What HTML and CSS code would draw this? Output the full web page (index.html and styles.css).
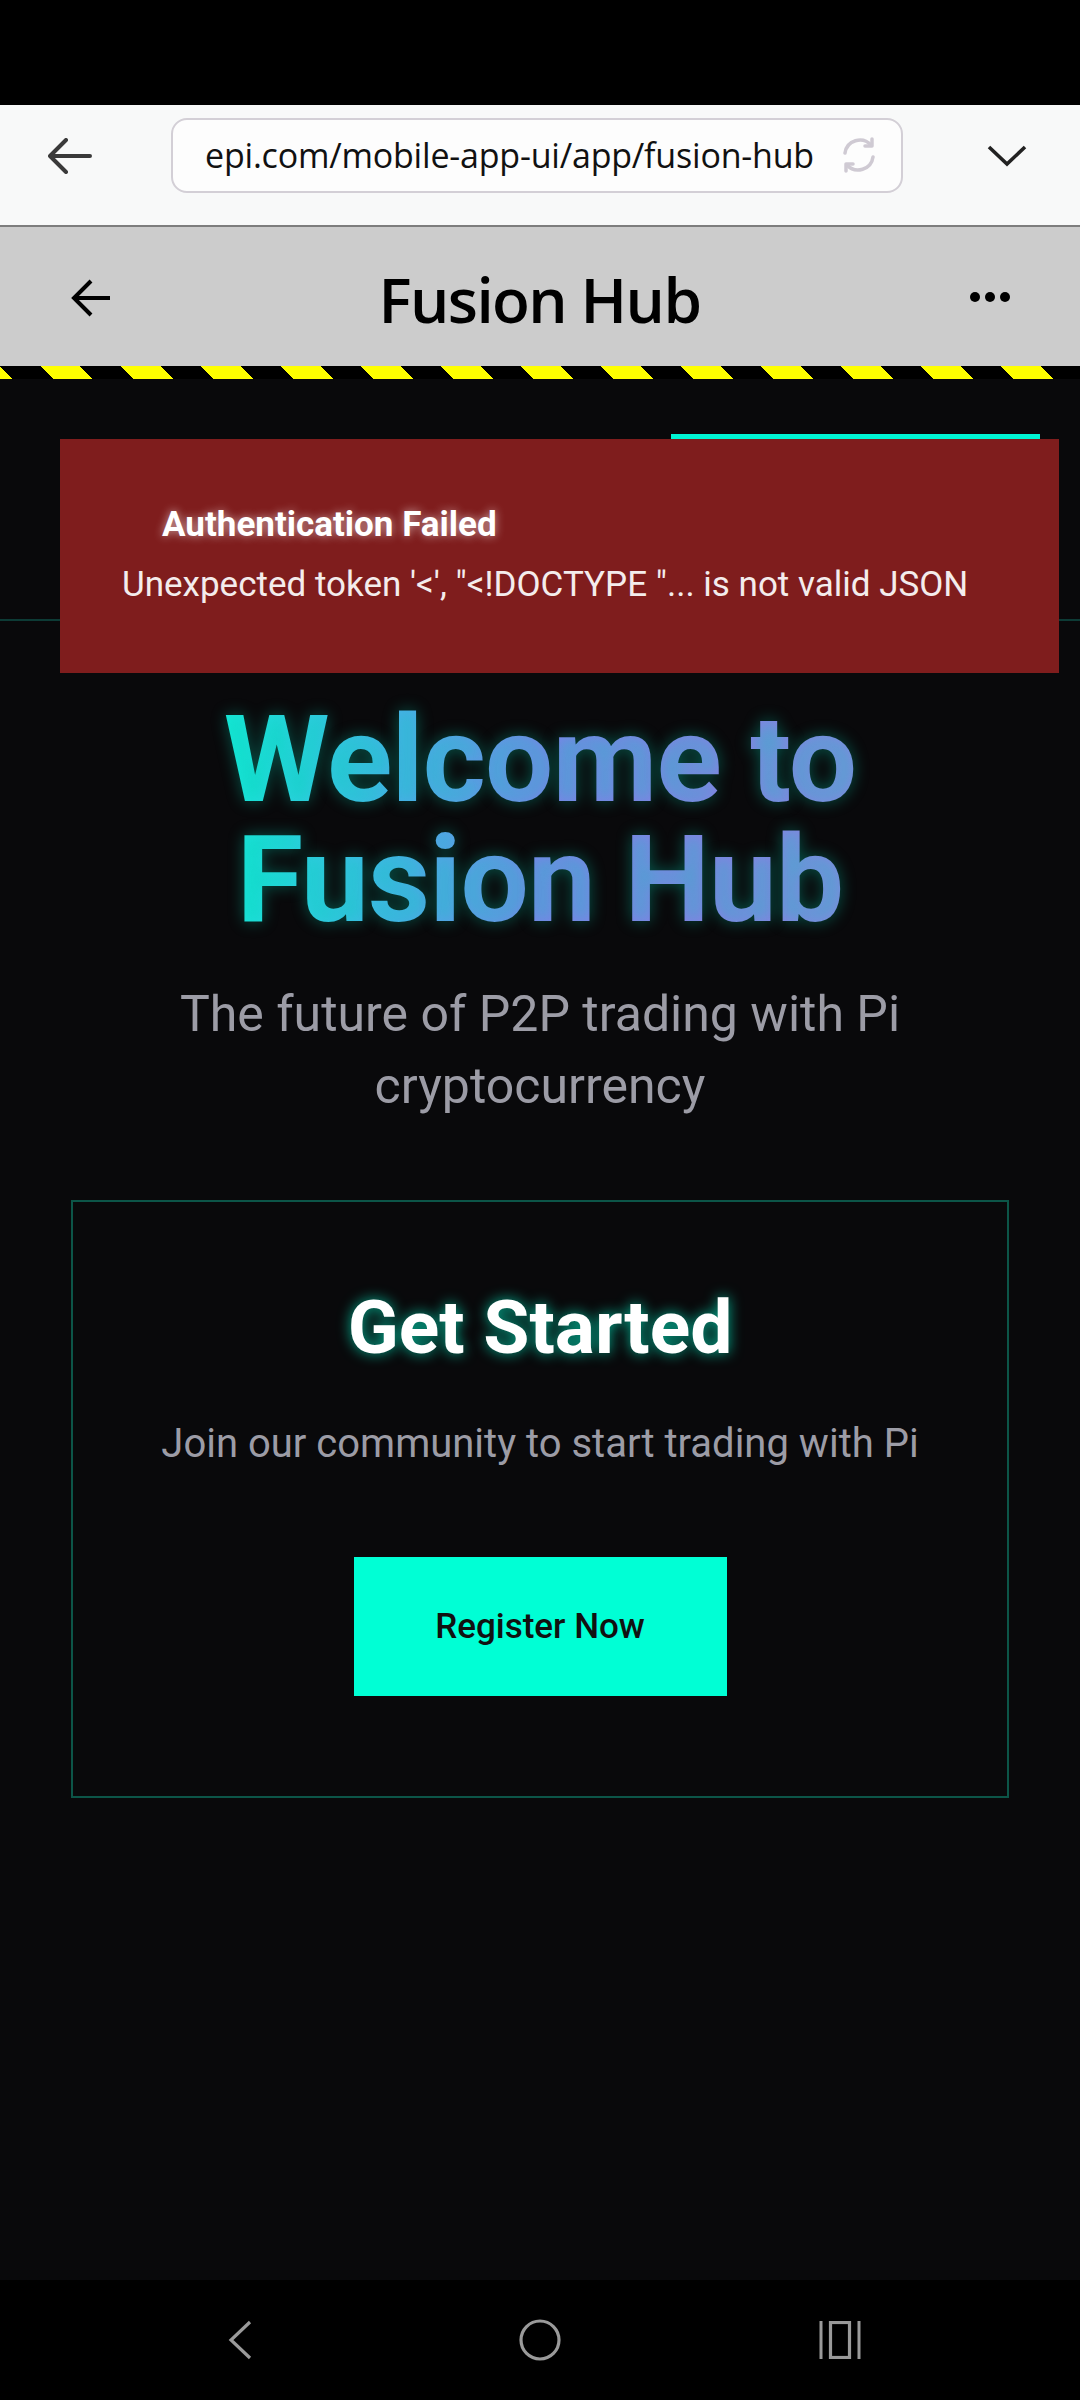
FILE: index.html
```html
<!DOCTYPE html>
<html lang="en">
<head>
<meta charset="utf-8">
<title>Fusion Hub</title>
<link rel="stylesheet" href="styles.css">
</head>
<body>
<div class="screen">
  <div class="statusbar"></div>
  <div class="browserbar">
    <svg class="b-back" width="48" height="40" viewBox="0 0 48 40"><path d="M44 20H6M20 4L4 20L20 36" fill="none" stroke="#3a3a3a" stroke-width="4" stroke-linecap="round" stroke-linejoin="round"/></svg>
    <div class="urlbox">
      <span class="url">epi.com/mobile-app-ui/app/fusion-hub</span>
      <svg class="reload" width="40" height="38" viewBox="0 0 40 38"><path d="M32 9A15 15 0 0 0 6 17M8 29A15 15 0 0 0 34 21" fill="none" stroke="#cfcad3" stroke-width="3.5" stroke-linecap="round"/><path d="M33 3V10H26M7 35V28H14" fill="none" stroke="#cfcad3" stroke-width="3.5" stroke-linecap="round" stroke-linejoin="round"/></svg>
    </div>
    <svg class="chev" width="40" height="22" viewBox="0 0 40 22"><path d="M2 2L20 19L38 2" fill="none" stroke="#222" stroke-width="3.6"/></svg>
  </div>
  <div class="appbar">
    <svg class="a-back" width="42" height="40" viewBox="0 0 42 40"><path d="M41 20H5M22 3L5 20L22 37" fill="none" stroke="#000" stroke-width="4"/></svg>
    <div class="a-title">Fusion Hub</div>
    <div class="dots"><i></i><i></i><i></i></div>
  </div>
  <div class="stripe"></div>
  <main class="main">
    <div class="tabs"><div class="tab-ind"></div></div>
    <section class="hero">
      <h1 class="headline">Welcome to Fusion Hub</h1>
      <p class="sub">The future of P2P trading with Pi cryptocurrency</p>
    </section>
    <section class="card">
      <h2 class="card-title">Get Started</h2>
      <p class="card-text">Join our community to start trading with Pi</p>
      <button class="btn">Register Now</button>
    </section>
    <div class="toast">
      <div class="toast-title">Authentication Failed</div>
      <div class="toast-msg">Unexpected token '&lt;', "&lt;!DOCTYPE "... is not valid JSON</div>
    </div>
  </main>
  <nav class="navbar">
    <span class="nav-cell"><svg width="26" height="40" viewBox="0 0 26 40"><path d="M23 2L4 20L23 38" fill="none" stroke="#9a9a9a" stroke-width="3.2"/></svg></span>
    <span class="nav-cell"><svg width="42" height="42" viewBox="0 0 42 42"><rect x="2" y="2" width="38" height="38" rx="19" fill="none" stroke="#9a9a9a" stroke-width="3.2"/></svg></span>
    <span class="nav-cell"><svg width="42" height="38" viewBox="0 0 42 38"><path d="M2 0V38M40 0V38" stroke="#9a9a9a" stroke-width="3"/><rect x="11.5" y="1.5" width="19" height="35" fill="none" stroke="#9a9a9a" stroke-width="3.2"/></svg></span>
  </nav>
</div>
</body>
</html>
```
FILE: styles.css
```css
* { box-sizing: border-box; }
html, body { margin: 0; padding: 0; }
body { background: #000; font-family: Roboto, "Liberation Sans", sans-serif; }
.screen { width: 1080px; height: 2400px; display: flex; flex-direction: column; overflow: hidden; }

.statusbar { height: 105px; background: #000; flex: none; }

.browserbar {
  height: 122px; flex: none; background: #f8f9f9;
  border-bottom: 2px solid #7d7d7d;
  display: flex; align-items: center; padding: 0 0 0 46px;
}
.b-back { flex: none; margin-top: -18px; filter: blur(0.6px); }
.urlbox {
  margin-left: 77px; width: 732px; height: 75px; margin-top: -20px;
  border: 2px solid #d3cfd6; border-radius: 16px; background: #fdfdfd;
  display: flex; align-items: center; padding: 0 22px 0 32px;
}
.url { font-family: "Open Sans", sans-serif; font-size: 34px; color: #111; letter-spacing: -0.2px; white-space: nowrap; flex: 1; overflow: hidden; }
.reload { flex: none; filter: blur(0.4px); }
.chev { margin-left: 84px; margin-top: -18px; }

.appbar {
  height: 139px; flex: none; background: #cccccc;
  display: grid; grid-template-columns: 1fr auto 1fr; align-items: center; padding: 0 70px 0 69px;
}
.a-back { margin-top: 2px; }
.a-title {
  font-family: "Open Sans", sans-serif; font-weight: 600; font-size: 62px; line-height: 84px; color: #000;
  letter-spacing: -1.6px; margin-top: 4px;
}
.dots { justify-self: end; display: flex; gap: 5px; }
.dots i { width: 10px; height: 10px; border-radius: 50%; background: #000; display: block; }

.stripe {
  height: 13px; flex: none;
  background: repeating-linear-gradient(45deg, #ffff00 0 9.19px, #000 9.19px 37.48px, #ffff00 37.48px 56.57px);
}

.main { flex: 1; background: #09090b; position: relative; display: flex; flex-direction: column; align-items: center; }

.tabs {
  width: 100%; height: 242px; flex: none; border-bottom: 2px solid #0d3b36;
  display: flex; justify-content: flex-end; padding: 55px 40px 0 0;
}
.tab-ind { width: 369px; height: 5px; background: #00f5d4; }

.hero { text-align: center; margin-top: 79px; width: 938px; }
.headline {
  margin: 0 auto; width: 650px; font-size: 121px; line-height: 120px; font-weight: 700; letter-spacing: -0.8px;
  background: linear-gradient(90deg, #14ecd8 0%, #4aaee9 28%, #7f80ea 50%, #8c7ce6 75%, #8a84e2 100%);
  -webkit-background-clip: text; background-clip: text; color: transparent;
  text-shadow: 0 0 16px rgba(0, 210, 180, 0.38);
}
.sub { margin: 38px 0 0; font-size: 50px; line-height: 72px; color: #9c9ca6; font-weight: 400; }

.card {
  margin-top: 78px; width: 938px; border: 2px solid #0c5548;
  display: flex; flex-direction: column; align-items: center;
  padding: 82px 0 100px;
}
.card-title {
  margin: 0; font-size: 75px; line-height: 86px; font-weight: 700; color: #fff;
  text-shadow: 0 0 14px rgba(0, 255, 210, 0.7);
}
.card-text { margin: 44px 0 0; font-size: 40px; line-height: 60px; color: #9c9ca6; }
.btn {
  margin-top: 83px; width: 373px; height: 139px; border: 0; border-radius: 0;
  background: #00ffd5; color: #111; font-family: Roboto, sans-serif; font-size: 35px; font-weight: 500;
}

.toast {
  position: absolute; left: 60px; top: 60px; width: 999px; height: 234px;
  background: #7f1d1d; padding: 64px 0 0 0;
}
.toast-title {
  margin-left: 102px; font-size: 35px; font-weight: 700; color: #fff; line-height: 44px;
  text-shadow: 0 0 10px rgba(255, 255, 255, 0.6);
}
.toast-msg { margin: 16px 0 0 62px; font-size: 35px; color: #f4ecec; line-height: 44px; }

.navbar {
  height: 120px; flex: none; background: #000;
  display: flex; align-items: center; justify-content: center;
}
.nav-cell { width: 300px; display: flex; justify-content: center; }
```
